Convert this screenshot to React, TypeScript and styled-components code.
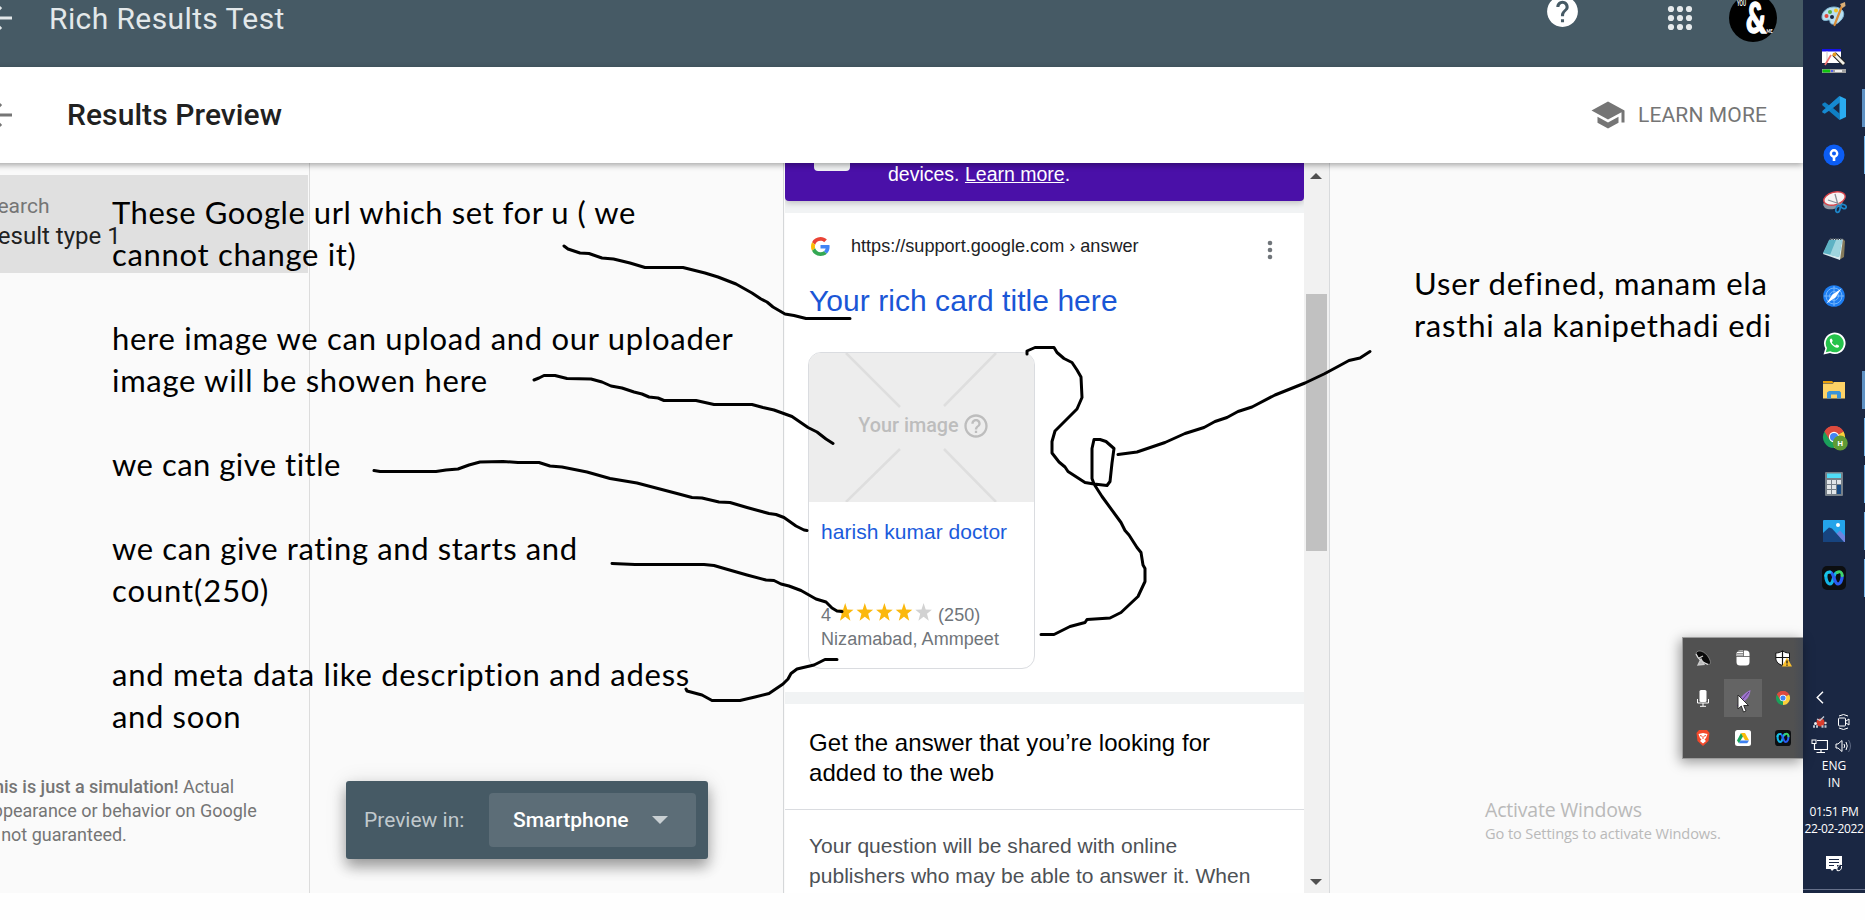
import React from 'react';
import styled, { createGlobalStyle } from 'styled-components';
import { MdArrowBack, MdSchool, MdHelp, MdHelpOutline } from 'react-icons/md';

const GlobalStyle = createGlobalStyle`
  * { box-sizing: border-box; }
  html, body { margin: 0; padding: 0; background: #fefefe; overflow: hidden; }
  svg { display: block; flex: none; }
`;

const roboto = `Roboto, sans-serif`;
const arial = `"Liberation Sans", Arial, sans-serif`;
const segoe = `"Open Sans", "Noto Sans", sans-serif`;

const Screen = styled.div`
  position: relative;
  display: flex;
  width: 1865px;
  height: 893px;
  overflow: hidden;
  background: #fafafa;
`;

const Page = styled.div`
  display: flex;
  flex-direction: column;
  width: 1803px;
  height: 893px;
  overflow: hidden;
  font-family: ${roboto};
`;

const TopBar = styled.header`
  flex: none;
  display: flex;
  align-items: flex-start;
  height: 67px;
  background: #465a65;
  color: #e3e8ea;
`;

const BackArrow = styled.div<{ $color: string }>`
  width: 18px;
  margin-left: -18px;
  margin-right: 18px;
  color: ${(p) => p.$color};
  svg { width: 36px; height: 36px; }
`;

const AppTitle = styled.h1`
  flex: 1;
  margin: 0 0 0 31px;
  font-size: 30px;
  line-height: 38px;
  font-weight: 400;
  letter-spacing: 0.4px;
`;

const TopActions = styled.div`
  display: flex;
  align-items: flex-start;
`;

const HelpButton = styled.div`
  margin: -7px 81px 0 0;
  color: #fff;
  svg { width: 37px; height: 37px; }
`;

const AppsButton = styled.div`
  margin-right: 31px;
`;

const Avatar = styled.div`
  margin: -6px 26px 0 0;
  svg { width: 48px; height: 48px; }
`;

const SubBar = styled.div`
  position: relative;
  z-index: 2;
  flex: none;
  display: flex;
  align-items: center;
  height: 96px;
  margin-left: -10px;
  padding-left: 10px;
  background: #fff;
  box-shadow: 0 2px 6px rgba(0, 0, 0, 0.35);
`;

const PageTitle = styled.h2`
  flex: 1;
  margin: 0 0 0 49px;
  font-size: 30px;
  line-height: 36px;
  font-weight: 500;
  letter-spacing: 0.08px;
  color: #212121;
`;

const LearnMore = styled.div`
  display: flex;
  align-items: center;
  gap: 12px;
  margin-right: 36px;
  font-size: 21px;
  line-height: 24px;
  letter-spacing: 0.12px;
  color: #757575;
  svg { width: 36px; height: 36px; }
`;

const Body = styled.main`
  flex: 1;
  display: flex;
  min-height: 0;
`;

const Sidebar = styled.aside`
  display: flex;
  flex-direction: column;
  justify-content: space-between;
  width: 310px;
  padding: 12px 0 46px;
  border-right: 1px solid #dcdcdc;
`;

const ResultItem = styled.div`
  width: 308px;
  height: 98px;
  padding-top: 18px;
  background: #e0e0e0;
  overflow: hidden;
  white-space: nowrap;
`;

const ResultLabel = styled.div`
  margin-left: -15px;
  font-size: 21px;
  line-height: 26px;
  color: #757575;
`;

const ResultName = styled.div`
  margin-left: -17px;
  font-size: 24px;
  line-height: 34px;
  color: #212121;
`;

const Disclaimer = styled.p`
  margin: 0 0 0 -17px;
  font-size: 18px;
  line-height: 24px;
  color: #757575;
  white-space: nowrap;
  b { font-weight: 500; }
`;

const Stage = styled.section`
  display: flex;
  align-items: flex-end;
  width: 474px;
  border-right: 1px solid #d5d7d9;
`;

const PreviewSwitch = styled.div`
  display: flex;
  align-items: center;
  justify-content: space-between;
  width: 362px;
  height: 78px;
  margin: 0 0 34px 36px;
  padding: 0 12px 0 18px;
  border-radius: 3px;
  background: #465a65;
  color: #c1c9cd;
  font-size: 21px;
  box-shadow: 0 8px 14px rgba(0, 0, 0, 0.33), 0 2px 22px rgba(0, 0, 0, 0.12);
`;

const DeviceSelect = styled.div`
  display: flex;
  align-items: center;
  gap: 23px;
  width: 207px;
  height: 54px;
  padding-left: 24px;
  border-radius: 4px;
  background: #5c6d77;
  color: #fff;
  font-weight: 500;
`;

const Phone = styled.section`
  display: flex;
  width: 546px;
  border-right: 1px solid #d8dadc;
`;

const PhoneView = styled.div`
  display: flex;
  flex-direction: column;
  width: 519px;
  margin-left: 1px;
  background: #f1f3f4;
  font-family: ${arial};
  overflow: hidden;
`;

const Banner = styled.div`
  flex: none;
  display: flex;
  height: 38px;
  margin-bottom: 12px;
  padding-left: 29px;
  gap: 38px;
  border-radius: 0 0 4px 4px;
  background: #4a10a8;
  box-shadow: 0 2px 6px rgba(0, 0, 0, 0.22);
  color: #fff;
  font-size: 19.5px;
  line-height: 22px;
`;

const BannerIcon = styled.div`
  width: 36px;
  height: 8px;
  border-radius: 0 0 4px 4px;
  background: #f1f3f4;
`;

const ResultPanel = styled.div`
  flex: none;
  display: flex;
  flex-direction: column;
  height: 479px;
  padding: 19px 31px 0 24px;
  background: #fff;
`;

const UrlRow = styled.div`
  display: flex;
  align-items: center;
  gap: 21px;
  height: 29px;
  padding-left: 2px;
  font-size: 18.1px;
  color: #202124;
  span { flex: 1; }
`;

const RichTitle = styled.h3`
  margin: 21px 0 31px;
  font-size: 30px;
  line-height: 38px;
  font-weight: 400;
  letter-spacing: 0.05px;
  color: #1a56d6;
`;

const Card = styled.div`
  display: flex;
  flex-direction: column;
  width: 227px;
  height: 317px;
  margin: 1px 0 0 -1px;
  border: 1px solid #dadce0;
  border-radius: 13px;
  overflow: hidden;
`;

const ImageSlot = styled.div`
  position: relative;
  display: flex;
  align-items: center;
  justify-content: center;
  height: 149px;
  background: #ededed;
  color: #bdbdbd;
`;

const SlotLines = styled.svg`
  position: absolute;
  inset: 0;
`;

const SlotLabel = styled.div`
  position: relative;
  display: flex;
  align-items: center;
  gap: 3px;
  margin: -3px 0 0 5px;
  font: 500 19.8px/24px ${roboto};
  svg { width: 28px; height: 28px; }
`;

const CardTitle = styled.div`
  margin: 18px 0 0 12px;
  font-size: 21px;
  line-height: 24px;
  letter-spacing: 0.03px;
  color: #1a5bdc;
`;

const CardMeta = styled.div`
  display: flex;
  flex-direction: column;
  margin: 59px 0 0 12px;
  font-size: 18px;
  line-height: 24px;
  letter-spacing: 0.05px;
  color: #70757a;
`;

const RatingRow = styled.div`
  display: flex;
  gap: 6px;
`;

const AnswerPanel = styled.div`
  flex: 1 0 auto;
  margin-top: 12px;
  background: #fff;
`;

const AnswerHead = styled.div`
  height: 106px;
  padding: 24px 24px 0;
  border-bottom: 1px solid #dadce0;
  font-size: 24px;
  line-height: 30px;
  letter-spacing: 0.06px;
  color: #000;
  white-space: nowrap;
`;

const AnswerText = styled.div`
  padding: 21px 24px 0;
  font-size: 21px;
  line-height: 30px;
  letter-spacing: 0.03px;
  color: #4d5156;
  white-space: nowrap;
`;

const ScrollTrack = styled.div`
  display: flex;
  flex-direction: column;
  align-items: center;
  justify-content: space-between;
  width: 25px;
  padding: 10px 1px 8px 0;
  background: #f1f1f1;
`;

const ScrollThumb = styled.div`
  width: 21px;
  height: 257px;
  margin-bottom: 213px;
  background: #c1c1c1;
`;

const Taskbar = styled.nav`
  display: flex;
  flex-direction: column;
  align-items: center;
  width: 62px;
  height: 893px;
  background: #1a2743;
  color: #fff;
`;

const AppSlot = styled.div<{ $mark?: 'wide' | 'thin' }>`
  flex: none;
  display: flex;
  align-items: center;
  justify-content: center;
  width: 62px;
  height: 38px;
  margin-bottom: 9px;
  border-right: ${(p) => (p.$mark === 'wide' ? '3px solid #5e91c4' : p.$mark === 'thin' ? '1px solid #76b9ed' : '0')};
  padding-right: ${(p) => (p.$mark === 'wide' ? 0 : p.$mark === 'thin' ? 2 : 3)}px;
  padding-left: 3px;
`;

const AppList = styled.div`
  display: flex;
  flex-direction: column;
  margin-top: -5px;
  height: 686px;
`;

const TrayRows = styled.div`
  display: flex;
  flex-direction: column;
  width: 62px;
  gap: 5px;
  margin-top: 7px;
`;

const TrayRow = styled.div<{ $left: number; $gap?: number }>`
  display: flex;
  align-items: center;
  gap: ${(p) => p.$gap ?? 0}px;
  height: 19px;
  padding-left: ${(p) => p.$left}px;
`;

const TrayText = styled.div<{ $top: number; $track?: number }>`
  margin-top: ${(p) => p.$top}px;
  font: 400 12px/17px ${segoe};
  letter-spacing: ${(p) => p.$track ?? 0}px;
  text-align: center;
  white-space: nowrap;
`;

const Notice = styled.div`
  margin-top: 19px;
`;

const DeskEdge = styled.div`
  width: 62px;
  height: 1px;
  margin-top: auto;
  margin-bottom: 3px;
  background: #66708a;
`;

const Watermark = styled.div`
  position: absolute;
  left: 1485px;
  top: 797px;
  font-family: ${segoe};
  color: #b9b9b9;
  line-height: 26px;
  font-size: 19.5px;
  letter-spacing: -0.2px;
  small { display: block; font-size: 14.6px; line-height: 20px; letter-spacing: -0.1px; }
`;

const TrayPopup = styled.div`
  position: absolute;
  left: 1682px;
  top: 637px;
  z-index: 3;
  display: grid;
  grid-template-columns: repeat(3, 38px);
  grid-auto-rows: 38px;
  gap: 2px;
  width: 121px;
  height: 122px;
  padding: 1px;
  border: 1px solid #9c9c9c;
  border-right: 0;
  background: linear-gradient(90deg, #515151 92%, #474c55);
  box-shadow: -2px 3px 12px rgba(0, 0, 0, 0.4);
`;

const TrayCell = styled.div<{ $active?: boolean }>`
  display: flex;
  align-items: center;
  justify-content: center;
  background: ${(p) => (p.$active ? '#646464' : 'transparent')};
`;

const Ink = styled.svg`
  position: absolute;
  inset: 0;
  z-index: 4;
`;

const Note = styled.div<{ $x: number; $y: number }>`
  position: absolute;
  z-index: 4;
  left: ${(p) => p.$x}px;
  top: ${(p) => p.$y}px;
  font-family: Lato, sans-serif;
  font-size: 31px;
  line-height: 42px;
  font-variant-ligatures: none;
  color: #000;
  white-space: pre;
`;

const NoteLine = styled.div<{ $track: number }>`
  height: 42px;
  letter-spacing: ${(p) => p.$track}px;
`;

const Pointer = styled.svg`
  position: absolute;
  left: 1737px;
  top: 694px;
  z-index: 5;
`;

const strokes = [
  '564,246 568,249 580,253 589,253.5 602,258 613.5,259 630,263 645,267.5 683,267.5 705,273 718,277 736,284 752,293 761,299 767,302 773,307 785,314 794,315.5 806,318.5 850,318.5',
  '534,380 539,378 544,375.5 555,375.5 567,378.5 591,379 602,382 611,386 622,388 634,392 642,394 649,397 658,398 664,400.5 696,400.5 714,404.5 752,404.5 763,407.5 774,410 792,416.5 808,427.5 817,432 826,439 833,443.5',
  '374,470.5 380,471.5 436,471.5 446,470 458,469 469,465 480,462 503,461.5 518,462.5 539,462.5 550,466 562,467 587,472 610,478.5 637,483 677,493.5 692,497.5 702,498 719,502 730,502.5 747,507.5 769,513.5 776,514.5 784,517.5 796,526 804,530 807,530.5',
  '612,563.5 635,564.5 704,564.5 714,565.5 726,569 747,575 766,580 774,580.5 781,584 789,586 801,590.5 816,599 826,602 832,608 837,611 842,611.5',
  '686,689 687,691 702,695 712,700.5 740,700.5 755,697 769,693.5 783,684 788,679 791,673.5 797,669 814,665 825,659.5 837,659.5',
  '1027,354 1027,351 1035,347.5 1054,347.5 1057,352.5 1064,358.5 1072,362.5 1077,370 1081,377 1082,397.5 1077,409 1055,431 1052,441.5 1052,453 1059,462 1065,467 1068,471.5 1085,482.5 1094,484 1107,485.5 1110,481.5 1112,463 1114,448.5 1106,441.5 1100,439.5 1094,439.5 1092,448.5 1092,478.5 1094,484 1102,496.5 1121,522.5 1125,530.5 1129,535 1137,547.5 1141,552.5 1143,565 1145,568.5 1145,581.5 1138,596.5 1121,612.5 1110,618 1087,619.5 1085,622.5 1070,626.5 1054,634.5 1041,634.5',
  '1118,454.5 1137,452 1165,442.5 1185,433.5 1204,427.5 1215,421.5 1227,417.5 1238,411.5 1252,407 1275,395 1305,383 1324,374 1338,366.5 1349,360.5 1360,358 1370,351.5',
];

const leftNotes: Array<[string, number]> = [
  ['These Google url which set for u ( we', 0.55],
  ['cannot change it)', 0.68],
  ['', 0],
  ['here image we can upload and our uploader', 0.72],
  ['image will be showen here', 0.7],
  ['', 0],
  ['we can give title', 0.48],
  ['', 0],
  ['we can give rating and starts and', 0.62],
  ['count(250)', 0.9],
  ['', 0],
  ['and meta data like description and adess', 0.74],
  ['and soon', 0.65],
];

const rightNotes: Array<[string, number]> = [
  ['User defined, manam ela', 0.84],
  ['rasthi ala kanipethadi edi', 0.8],
];

const AppsGrid = () => (
  <svg width="36" height="36" fill="#e6eaec">
    {[9, 18, 27].map((y) => [9, 18, 27].map((x) => <circle key={`${x}-${y}`} cx={x} cy={y} r="3.1" />))}
  </svg>
);

const AvatarArt = () => (
  <svg viewBox="0 0 48 48">
    <circle cx="24" cy="24" r="24" fill="#000" />
    <g fill="#fff" fontFamily="Lato, sans-serif" fontWeight="900">
      <text x="17" y="38.500" fontSize="42" textLength="20" lengthAdjust="spacingAndGlyphs" stroke="#fff" strokeWidth="1.500">&amp;</text>
      <text x="8" y="12" fontSize="7" textLength="9" lengthAdjust="spacingAndGlyphs">YOU</text>
      <text x="37.500" y="38.500" fontSize="5.500" textLength="6" lengthAdjust="spacingAndGlyphs">ME</text>
    </g>
  </svg>
);

const GoogleG = ({ size }: { size: number }) => (
  <svg width={size} height={size} viewBox="0 0 48 48">
    <path fill="#EA4335" d="M24 9.5c3.54 0 6.71 1.22 9.21 3.6l6.85-6.85C35.9 2.38 30.47 0 24 0 14.62 0 6.51 5.38 2.56 13.22l7.98 6.19C12.43 13.72 17.74 9.5 24 9.5z" />
    <path fill="#4285F4" d="M46.98 24.55c0-1.57-.15-3.09-.38-4.55H24v9.02h12.94c-.58 2.96-2.26 5.48-4.78 7.18l7.73 6c4.51-4.18 7.09-10.36 7.09-17.65z" />
    <path fill="#FBBC05" d="M10.53 28.59c-.48-1.45-.76-2.99-.76-4.59s.27-3.14.76-4.59l-7.98-6.19C.92 16.46 0 20.12 0 24c0 3.88.92 7.54 2.56 10.78l7.97-6.19z" />
    <path fill="#34A853" d="M24 48c6.48 0 11.93-2.13 15.89-5.81l-7.73-6c-2.15 1.45-4.92 2.3-8.16 2.3-6.26 0-11.57-4.22-13.47-9.91l-7.98 6.19C6.51 42.62 14.62 48 24 48z" />
  </svg>
);

const MoreDots = styled.svg`
  margin-top: 6px;
`;

const Dots = () => (
  <MoreDots width="6" height="20" fill="#70757a">
    <circle cx="3" cy="3" r="2.3" /><circle cx="3" cy="10" r="2.3" /><circle cx="3" cy="17" r="2.3" />
  </MoreDots>
);

const Stars = () => (
  <svg width="95" height="20">
    {[0, 1, 2, 3, 4].map((i) => (
      <path
        key={i}
        transform={`translate(${i * 19.6} 0)`}
        fill={i < 4 ? '#fbb80d' : '#d2d2d2'}
        d="M8.200 0 L10.300 6.500 L16.500 6.700 L11.600 10.800 L13.400 17.800 L8.200 13.800 L3 17.800 L4.800 10.800 L-.1 6.700 L6.100 6.500 Z"
      />
    ))}
  </svg>
);

const Chrome = ({ size, badge }: { size: number; badge?: boolean }) => (
  <svg width={size} height={size} viewBox="0 0 24 24" overflow="visible">
    <path d="M12 12 L1.6 6 A12 12 0 0 1 22.4 6 Z" fill="#dd4b3e" />
    <path d="M12 12 L22.4 6 A12 12 0 0 1 12 24 Z" fill="#fdd03b" />
    <path d="M12 12 L12 24 A12 12 0 0 1 1.6 6 Z" fill="#1ba05b" />
    <path d="M12 6.5 H22.6 A12 12 0 0 0 1.6 6 L7 14.8Z" fill="#dd4b3e" />
    <circle cx="12" cy="12" r="5.6" fill="#fff" />
    <circle cx="12" cy="12" r="4.4" fill="#4385f5" />
    {badge && (
      <g>
        <circle cx="18.8" cy="18.5" r="8.2" fill="#5f9b35" />
        <text x="18.8" y="21.6" fontSize="8.5" fontWeight="700" fontFamily="Roboto, sans-serif" textAnchor="middle" fill="#fff">H</text>
      </g>
    )}
  </svg>
);

const Webex = ({ size }: { size: number }) => (
  <svg width={size} height={size} viewBox="0 0 24 24" fill="none" strokeLinecap="round">
    <rect width="24" height="24" rx="5" fill="#0c0e10" />
    <path d="M3.800 9.500C3.800 14 5.500 18 8 18c4 0 3-11.500 7-11.500" stroke="#12b4e6" strokeWidth="3.200" />
    <path d="M20.200 9.500C20.200 14 18.500 18 16 18c-4 0-4-12-8-12" stroke="#2a5cf0" strokeWidth="3.200" />
    <path d="M15 6.500C18 4.500 20.200 6.500 20.200 9.500" stroke="#3fd46b" strokeWidth="3" />
    <path d="M3.800 9.500C3.800 7.500 5.500 6 8 6" stroke="#17c4e8" strokeWidth="3" />
  </svg>
);

const PaintIcon = () => (
  <svg width="26" height="26" viewBox="0 0 26 26">
    <path d="M13 6C6 6 1 11 1 16c0 4 3 4 6 3 2-.5 2 1 2 2 .5 3 6 3 9 0 5-4 6-9 3-12-2-2-5-3-8-3z" fill="#b9dff0" stroke="#7fb7d4" />
    <circle cx="5.500" cy="15" r="2" fill="#e3473d" /><circle cx="9" cy="11" r="2" fill="#55b348" /><circle cx="15" cy="9.500" r="2" fill="#f3c522" />
    <circle cx="11" cy="16" r="2" fill="#1a2743" />
    <path d="M21 5 L13.500 24" stroke="#d98b36" strokeWidth="2.200" strokeLinecap="round" />
    <path d="M19 3 L24 1 L24.500 5 L21.500 7z" fill="#d9ae77" />
  </svg>
);

const WandIcon = () => (
  <svg width="26" height="26" viewBox="0 0 26 26">
    <rect x="1" y="2" width="19" height="13" fill="#fff" /><rect x="1" y="1" width="19" height="2.500" fill="#1512e8" />
    <path d="M6 3V15" stroke="#c8c8c8" /><path d="M4 17 L10 7" stroke="#ee7070" strokeWidth="1.700" />
    <path d="M13 6 L23 16" stroke="#222" strokeWidth="5" /><path d="M13.500 6.500 L23 16" stroke="#f2efe6" strokeWidth="2.800" />
    <circle cx="13.500" cy="6.500" r="2" fill="#e69a21" />
    <rect x="1" y="21" width="24" height="4" fill="#a0a0a0" /><rect x="1.500" y="21.500" width="7.500" height="3" fill="#0fc50f" /><rect x="14" y="22" width="7" height="2" fill="#eee" /><rect x="10" y="22" width="2" height="2" fill="#5560f0" />
  </svg>
);

const VsCode = () => (
  <svg width="24" height="24" viewBox="0 0 24 24">
    <path d="M17.500 0 L7.300 9.500 3 6.200 .3 7.700 V9.200 L17.500 24 V17.500 L11 12 17.500 6.500z" fill="#0f7fc4" />
    <path d="M.3 15 V16.400 L2.800 17.800 7.300 14.500 17.500 6.500 V0z" fill="#1689d1" />
    <path d="M17.500 0 L24 3 V21 L17.500 24z" fill="#2aabf0" />
  </svg>
);

const KeyIcon = () => (
  <svg width="22" height="22" viewBox="0 0 22 22">
    <circle cx="11" cy="11" r="10.500" fill="#0c5df4" />
    <circle cx="11" cy="9.500" r="3.200" fill="none" stroke="#fff" strokeWidth="2.400" /><path d="M11 12V17" stroke="#fff" strokeWidth="2.600" />
  </svg>
);

const SnipIcon = () => (
  <svg width="25" height="24" viewBox="0 0 25 24">
    <ellipse cx="11" cy="13" rx="10" ry="6" transform="rotate(-15 11 13)" fill="#8d96a3" />
    <ellipse cx="12.500" cy="8.500" rx="11" ry="6.300" transform="rotate(-15 12.500 8.500)" fill="#f6f3f3" stroke="#d8434a" strokeWidth="1.400" />
    <path d="M13 4 L16 15 M6 10 L18 14" stroke="#8a8f98" strokeWidth="1.300" />
    <g fill="none" stroke="#1e86c9" strokeWidth="1.700"><ellipse cx="16" cy="19" rx="2" ry="3.500" transform="rotate(15 16 19)" /><ellipse cx="21.500" cy="16.500" rx="2.800" ry="1.900" transform="rotate(25 21.500 16.500)" /></g>
  </svg>
);

const NotepadIcon = () => (
  <svg width="24" height="24" viewBox="0 0 24 24">
    <path d="M21 2 L23 4 22 20 17 23z" fill="#857a5a" /><path d="M8 2 H21 L18 23 1 17z" fill="#d7eaf0" />
    <path d="M7 3 H20 L17 20 1 16z" fill="#5db2c4" /><path d="M14 3 H20 L17 20 8 18z" fill="#9fd5df" />
    <path d="M8 2H21" stroke="#4a5560" strokeWidth="1.800" strokeDasharray="1.500 1" />
  </svg>
);

const CompassIcon = () => (
  <svg width="22" height="22" viewBox="0 0 22 22">
    <circle cx="11" cy="11" r="10.800" fill="#1c7df2" />
    <g fill="none" stroke="#74b5fb"><circle cx="11" cy="11" r="8" /><circle cx="11" cy="11" r="4.500" /><path d="M11 1V21M1 11H21" /></g>
    <path d="M18.500 3.500 L12.500 12.500 3.500 18.500 9.500 9.500z" fill="#fff" />
  </svg>
);

const WhatsApp = () => (
  <svg width="23" height="23" viewBox="0 0 23 23">
    <path d="M.5 22.500 L2.300 16.500 A10.800 10.800 0 1 1 7 21z" fill="#fff" />
    <path d="M2.800 20.200 L4 16 A9 9 0 1 1 7.300 19.200z" fill="#25c34b" />
    <path d="M8 6.500c-2 1-1.300 4 1.200 6.500s5.500 3.600 6.800 1.700c.5-1-.4-1.500-2.200-2.300-.8-.2-1 1.200-1.700 1-1.400-.6-2.500-1.700-3.200-3 0-.6.900-1 .8-1.600C9 7 8.700 6.200 8 6.500z" fill="#fff" />
  </svg>
);

const FolderIcon = () => (
  <svg width="22" height="20" viewBox="0 0 22 20">
    <path d="M0 1H9L11 3H0z" fill="#eba10b" /><path d="M0 3.500 H10 L11 2 H22 V18.500 H0z" fill="#fed366" />
    <path d="M4 18.500V12.500L6 11H16.500L18 12.500V18.500H14V14.500H8V18.500z" fill="#3b94da" />
  </svg>
);

const CalcIcon = () => (
  <svg width="18" height="24" viewBox="0 0 18 24">
    <rect width="18" height="24" rx="1" fill="#767f88" /><rect x="2" y="1.500" width="14" height="4.500" fill="#4fdcf7" />
    {[8, 13, 18].map((y) => [2, 7, 12].map((x) => <rect key={`${x}-${y}`} x={x} y={y} width="4" height="4" fill="#e1e5e8" />))}
    <rect x="12" y="13" width="4" height="9" fill="#174a83" />
  </svg>
);

const PhotosIcon = () => (
  <svg width="22" height="22" viewBox="0 0 22 22">
    <rect width="22" height="22" rx="1" fill="#24a4ea" /><path d="M11 16 L17 10.500 22 16V22H11z" fill="#6f83dd" />
    <path d="M0 13 L6 7.500 9 8.500 21 22H0z" fill="#17447f" /><circle cx="15" cy="5" r="2" fill="#fff" />
  </svg>
);

const Arrow = ({ up }: { up?: boolean }) => (
  <svg width="12" height="6" fill="#505050"><path d={up ? 'M0 6 L6 0 L12 6z' : 'M0 0 L12 0 L6 6z'} /></svg>
);

const DishIcon = () => (
  <svg width="16" height="17" viewBox="0 0 16 17">
    <path d="M1 3C3-1 10 1 14 8 17 14 15 15 12 14 7 13 2 8 1 3z" fill="#0a0a0a" stroke="#999" strokeWidth=".7" />
    <path d="M1 4 Q4 11 13 14.500" stroke="#ddd" strokeWidth="1.200" fill="none" />
    <path d="M4 8 L8 6 M3 15 L6 9 L9 14.500z" stroke="#ccc" strokeWidth="1.300" fill="#bbb" />
  </svg>
);
const MouseIcon = () => (
  <svg width="14" height="16">
    <rect x=".5" y=".5" width="13" height="15" rx="3.500" fill="#fff" />
    <path d="M7.500 0V6.500M0 6.500H14" stroke="#555" fill="none" strokeWidth=".8" />
    <path d="M1.500 1.500H7M1.500 3.500H7M1.500 5.200H7" stroke="#222" strokeDasharray="1 1" strokeWidth="1.200" />
  </svg>
);
const ShieldIcon = () => (
  <svg width="17" height="17" viewBox="0 0 17 17">
    <path d="M7.500 .8C10 2.500 12 3 14.500 3V8c0 4-4 6.500-7 7.500C4 14.500 .8 12 .8 8V3C3 3 5.500 2.500 7.500 .8z" fill="#fff" stroke="#111" /><path d="M7.500 1V15M1 7.500H14" stroke="#111" strokeWidth="1.200" />
    <path d="M12 7.500 L17 16.500 H7z" fill="#fbc02d" /><path d="M12 10.500V13.500M12 14.500V15.700" stroke="#222" strokeWidth="1.400" />
  </svg>
);
const MicIcon = () => (
  <svg width="12" height="17"><rect x="2.500" y="0" width="7" height="12" rx="1.500" fill="#fff" /><path d="M.5 9V13H11.500V9M6 13V16M3 16.300H9" stroke="#fff" fill="none" /></svg>
);
const FeatherIcon = () => (
  <svg width="16" height="18"><path d="M15.500 1C15 7 12 12 4 15 3 10 9 4 15.500 1z" fill="#a176cf" /><path d="M2 17 L14 3" stroke="#5a3b83" /></svg>
);
const BraveIcon = () => (
  <svg width="14" height="16" viewBox="0 0 14 16">
    <path d="M3 0H11L13.500 3 12.500 11 7 16 1.500 11 .5 3z" fill="#f4492b" /><path d="M2.500 4 L7 3 11.500 4 10 8 8.500 9.500 10 11 7 13.500 4 11 5.500 9.500 4 8z" fill="#fff" /><path d="M4 5.500 L6 6.200M10 5.500 L8 6.200M7 6V9" stroke="#f4492b" />
  </svg>
);
const DriveIcon = () => (
  <svg width="16" height="16"><rect width="16" height="16" rx="2.500" fill="#fff" /><path d="M6 3 L2 10.500 4 13.300 8.200 6z" fill="#19a45b" /><path d="M6 3H10L14 10.300H10z" fill="#fbbd0b" /><path d="M5.500 10.500H14L12.200 13.300H4z" fill="#3d7ff0" /></svg>
);

const ChevronIcon = () => (
  <svg width="8" height="13" fill="none" stroke="#fff" strokeWidth="1.400"><path d="M7 .7 L1.200 6.500 L7 12.300" /></svg>
);
const PumpIcon = () => (
  <svg width="16" height="14">
    <circle cx="8.500" cy="7.500" r="4" fill="#d93c2c" />
    <path d="M1 11.500H6M9.500 11.500H15" stroke="#bcc5d0" strokeWidth="2.500" strokeDasharray="2 1" />
    <path d="M5 4 L8 5.500 L12 1.500" stroke="#c4ccd6" strokeWidth="1.300" fill="none" /><circle cx="3.500" cy="8.500" r="1.500" fill="#eee" /><circle cx="13.500" cy="8" r="1.200" fill="#ddd" />
  </svg>
);
const CamIcon = () => (
  <svg width="12" height="16" fill="none" stroke="#fff"><rect x=".5" y="4" width="7" height="8" rx="1" /><path d="M8 7 L11 5V11L8 9M1 2Q5.500-1 10 2M1 14Q5.500 17 10 14" /></svg>
);
const NetIcon = () => (
  <svg width="17" height="14" fill="none" stroke="#fff"><path d="M6 1.500H16.500V10.500H3.500V5M10 10.500V13.500M5.500 13.500H14" strokeWidth="1.200" /><rect x="1" y="1" width="4" height="3.500" /></svg>
);
const SoundIcon = () => (
  <svg width="17" height="14" fill="none" stroke="#fff"><path d="M1 5H3L7 1.500V12.500L3 9H1z" /><path d="M9 5Q10.300 7 9 9M11 3Q13.500 7 11 11" /><path d="M13.500 1Q17.500 7 13.500 13" stroke="#5c6781" /></svg>
);
const NoticeIcon = () => (
  <svg width="17" height="17"><path d="M0 0H16V9H11V13H8L6 15 4.500 13H0z" fill="#fff" /><path d="M3 3.500H13M3 6.500H13M3 9.500H8" stroke="#1a2743" /><path d="M14 8.500C12 10 10.500 12 11 14.500 14 15.500 16 13 15.500 10" stroke="#fff" fill="#1a2743" /></svg>
);

const apps: Array<{ icon: React.ReactNode; mark?: 'wide' | 'thin' }> = [
  { icon: <PaintIcon /> },
  { icon: <WandIcon /> },
  { icon: <VsCode />, mark: 'wide' },
  { icon: <KeyIcon />, mark: 'thin' },
  { icon: <SnipIcon /> },
  { icon: <NotepadIcon /> },
  { icon: <CompassIcon /> },
  { icon: <WhatsApp /> },
  { icon: <FolderIcon />, mark: 'wide' },
  { icon: <Chrome size={22} badge />, mark: 'thin' },
  { icon: <CalcIcon />, mark: 'thin' },
  { icon: <PhotosIcon />, mark: 'thin' },
  { icon: <Webex size={24} />, mark: 'thin' },
];

const trayIcons = [
  <DishIcon />, <MouseIcon />, <ShieldIcon />, <MicIcon />, <FeatherIcon />, <Chrome size={14} />, <BraveIcon />, <DriveIcon />, <Webex size={16} />,
];

const NoteBlock = ({ x, y, lines }: { x: number; y: number; lines: Array<[string, number]> }) => (
  <Note $x={x} $y={y}>
    {lines.map(([text, track], i) => <NoteLine key={i} $track={track}>{text}</NoteLine>)}
  </Note>
);

export default function App() {
  return (
    <>
      <GlobalStyle />
      <Screen>
        <Page>
          <TopBar>
            <BackArrow $color="#e3e8ea"><MdArrowBack /></BackArrow>
            <AppTitle>Rich Results Test</AppTitle>
            <TopActions>
              <HelpButton><MdHelp /></HelpButton>
              <AppsButton><AppsGrid /></AppsButton>
              <Avatar><AvatarArt /></Avatar>
            </TopActions>
          </TopBar>
          <SubBar>
            <BackArrow $color="#757575"><MdArrowBack /></BackArrow>
            <PageTitle>Results Preview</PageTitle>
            <LearnMore><MdSchool />LEARN MORE</LearnMore>
          </SubBar>
          <Body>
            <Sidebar>
              <ResultItem>
                <ResultLabel>Search</ResultLabel>
                <ResultName>Result type 1</ResultName>
              </ResultItem>
              <Disclaimer>
                <b>This is just a simulation!</b> Actual<br />
                appearance or behavior on Google<br />
                is not guaranteed.
              </Disclaimer>
            </Sidebar>
            <Stage>
              <PreviewSwitch>
                Preview in:
                <DeviceSelect>
                  Smartphone
                  <svg width="16" height="8" fill="#c9d0d3"><path d="M0 0H16L8 8z" /></svg>
                </DeviceSelect>
              </PreviewSwitch>
            </Stage>
            <Phone>
              <PhoneView>
                <Banner>
                  <BannerIcon />
                  <div>devices. <u>Learn more</u>.</div>
                </Banner>
                <ResultPanel>
                  <UrlRow>
                    <GoogleG size={19} />
                    <span>https://support.google.com › answer</span>
                    <Dots />
                  </UrlRow>
                  <RichTitle>Your rich card title here</RichTitle>
                  <Card>
                    <ImageSlot>
                      <SlotLines width="225" height="149" stroke="#dedede" strokeWidth="2.5">
                        <path d="M37 0 L91 54M187 0 L135 53M91 96 L37 149M135 96 L187 149" />
                      </SlotLines>
                      <SlotLabel>Your image<MdHelpOutline /></SlotLabel>
                    </ImageSlot>
                    <CardTitle>harish kumar doctor</CardTitle>
                    <CardMeta>
                      <RatingRow>4<Stars />(250)</RatingRow>
                      <div>Nizamabad, Ammpeet</div>
                    </CardMeta>
                  </Card>
                </ResultPanel>
                <AnswerPanel>
                  <AnswerHead>Get the answer that you’re looking for<br />added to the web</AnswerHead>
                  <AnswerText>Your question will be shared with online<br />publishers who may be able to answer it. When</AnswerText>
                </AnswerPanel>
              </PhoneView>
              <ScrollTrack>
                <Arrow up />
                <ScrollThumb />
                <Arrow />
              </ScrollTrack>
            </Phone>
          </Body>
        </Page>
        <Taskbar>
          <AppList>
            {apps.map((a, i) => <AppSlot key={i} $mark={a.mark}>{a.icon}</AppSlot>)}
          </AppList>
          <TrayRows>
            <TrayRow $left={13}><ChevronIcon /></TrayRow>
            <TrayRow $left={9} $gap={10}><PumpIcon /><CamIcon /></TrayRow>
            <TrayRow $left={8} $gap={7}><NetIcon /><SoundIcon /></TrayRow>
          </TrayRows>
          <TrayText $top={2}>ENG<br />IN</TrayText>
          <TrayText $top={12} $track={-0.35}>01:51 PM<br />22-02-2022</TrayText>
          <Notice><NoticeIcon /></Notice>
          <DeskEdge />
        </Taskbar>
        <Watermark>Activate Windows<small>Go to Settings to activate Windows.</small></Watermark>
        <TrayPopup>
          {trayIcons.map((icon, i) => <TrayCell key={i} $active={i === 4}>{icon}</TrayCell>)}
        </TrayPopup>
        <NoteBlock x={112} y={191} lines={leftNotes} />
        <NoteBlock x={1414} y={262} lines={rightNotes} />
        <Ink width="1803" height="893" fill="none" stroke="#000" strokeWidth="3" strokeLinecap="round" strokeLinejoin="round">
          {strokes.map((points) => <polyline key={points} points={points} />)}
        </Ink>
        <Pointer width="14" height="20"><path d="M1 1V15L4.300 12 6.500 18 9 17 6.700 11.500H11.500z" fill="#fff" stroke="#222" strokeWidth=".9" /></Pointer>
      </Screen>
    </>
  );
}
